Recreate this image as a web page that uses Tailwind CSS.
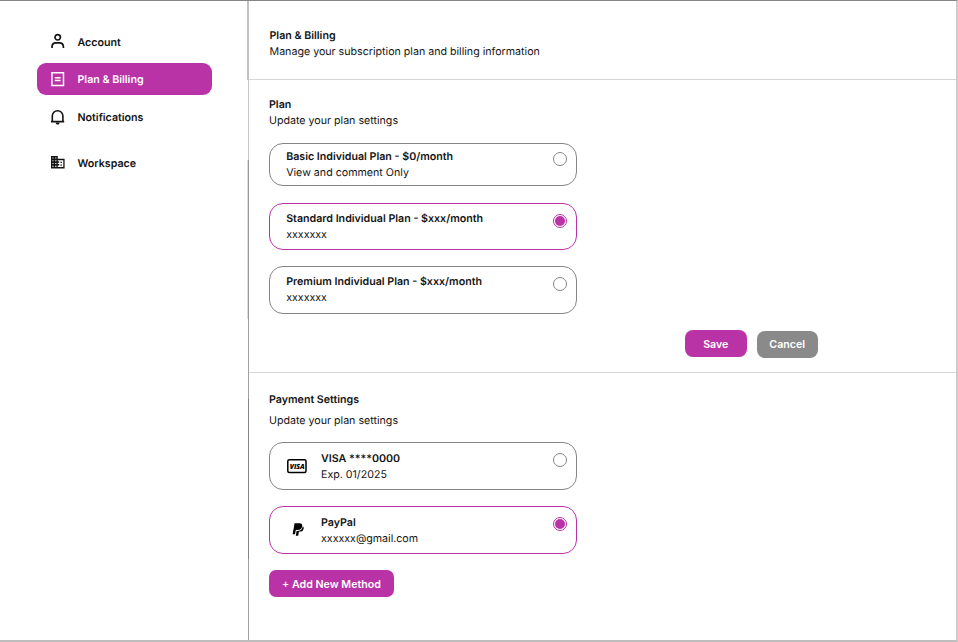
<!DOCTYPE html>
<html lang="en">
<head>
<meta charset="utf-8">
<title>Plan &amp; Billing</title>
<script src="https://cdn.jsdelivr.net/npm/@tailwindcss/browser@4"></script>
</head>
<body class="bg-white font-['Inter',sans-serif] text-[10.66px] leading-4 text-[#141414] [text-rendering:geometricPrecision]">
<div class="flex h-[642px] w-[958px] overflow-hidden border-t border-r-2 border-b-2 border-t-[#858585] border-r-[#cccccc] border-b-[#bdbdbd]">
  <aside class="flex w-[247px] shrink-0 flex-col pt-[25px] pl-[37px] font-semibold">
    <a class="flex h-8 w-[175px] items-center pl-[13px]">
      <svg class="mr-[11.5px] -mt-[3px] size-4" viewBox="0 0 16 16" fill="none" stroke="currentColor" stroke-width="1.7"><circle cx="7.7" cy="4.3" r="2.7"/><path d="M2 15v-1.5a4 4 0 0 1 4-3.7h3.4a4 4 0 0 1 4 3.7V15"/></svg><span class="pt-[2px]">Account</span></a>
    <a class="mt-[5.4px] flex h-8 w-[175px] items-center rounded-[9px] bg-[#ba33a6] pl-[13px] text-white">
      <svg class="mr-[11.5px] size-4" viewBox="0 0 16 16" fill="none" stroke="currentColor" stroke-width="1.5"><path d="M1.9 1.8h11.6v12.6H1.9zM4.8 6.7h5.8M4.8 9.5h5.8"/></svg><span class="pt-[1px]">Plan &amp; Billing</span></a>
    <a class="mt-[5.6px] flex h-8 w-[175px] items-center pl-[13px]">
      <svg class="mr-[11.5px] size-4" viewBox="0 0 16 16" fill="none" stroke="currentColor" stroke-width="1.6"><path d="M1 12.6h13.2M2.3 12.6V7a5.3 5.3 0 0 1 10.6 0v5.6"/><path d="M5.4 13.6h4.4L8.6 15.4H6.6z" fill="currentColor" stroke="none"/></svg><span class="pt-[2px]">Notifications</span></a>
    <a class="mt-[14px] flex h-8 w-[175px] items-center pl-[13px]">
      <svg class="mr-[11.5px] -mt-px size-4" viewBox="0 0 16 16" fill="currentColor"><path fill-rule="evenodd" d="M1 2h6.8v2.8h6.8v9.6H1zM2.4 3.4v1.1h1.1V3.4zm2.8 0v1.1h1.2V3.4zM2.4 6.2v1.1h1.1V6.2zm2.8 0v1.1h1.2V6.2zM2.4 9v1.1h1.1V9zm2.8 0v1.1h1.2V9zm-2.8 2.7v1.2h1.1v-1.2zm2.8 0v1.2h1.2v-1.2zM7.8 6.2v1.1h1.4v1.4H7.8V10h1.4v1.4H7.8V13h5.5V6.2z"/><path d="M10.5 7.7h1.4v1.4h-1.4zM10.5 10.4h1.4v1.4h-1.4z"/></svg><span class="pt-[2px]">Workspace</span></a>
  </aside>
  <div class="flex w-[2px] shrink-0 flex-col items-end">
    <div class="h-[79px] w-[2px] bg-[#c2c2c2]"></div>
    <div class="h-[80px] w-px bg-[#c9c9c9]"></div>
    <div class="h-[159px] w-[2px] border-l border-[#dedede] bg-[#999999]"></div>
    <div class="h-[80px] w-px bg-[#a0a0a0]"></div>
    <div class="h-[160px] w-px bg-[#858585]"></div>
    <div class="grow w-px bg-[#a0a0a0]"></div>
  </div>
  <main class="flex grow flex-col">
    <header class="h-[79px] border-b border-[#d6d6d6] pt-[27px] pl-[20.5px]">
      <h1 class="font-semibold">Plan &amp; Billing</h1>
      <p>Manage your subscription plan and billing information</p>
    </header>
    <section class="h-[293px] border-b border-[#d6d6d6] pt-[17px] pl-[20px]">
      <h2 class="font-semibold">Plan</h2>
      <p>Update your plan settings</p>
      <label class="mt-[14px] flex h-[43px] w-[308px] rounded-[14px] border border-[#858585] pt-[5px] pr-[9.5px] pl-[16.2px]">
        <span class="grow"><b class="block font-semibold">Basic Individual Plan - $0/month</b>View and comment Only</span>
        <span class="mt-[3px] size-[14px] rounded-full border border-[#858585]"></span>
      </label>
      <label class="mt-[17px] flex h-[47px] w-[308px] rounded-[14px] border border-[#ba33a6] pt-[7px] pr-[9.5px] pl-[16.2px]">
        <span class="grow"><b class="block font-semibold">Standard Individual Plan - $xxx/month</b>xxxxxxx</span>
        <span class="mt-[3px] flex size-[14px] items-center justify-center rounded-full border border-[#ba33a6]"><i class="size-[10px] rounded-full bg-[#ba33a6]"></i></span>
      </label>
      <label class="mt-[16px] flex h-[48px] w-[308px] rounded-[14px] border border-[#858585] pt-[7px] pr-[9.5px] pl-[16.2px]">
        <span class="grow"><b class="block font-semibold">Premium Individual Plan - $xxx/month</b>xxxxxxx</span>
        <span class="mt-[3px] size-[14px] rounded-full border border-[#858585]"></span>
      </label>
      <div class="mt-[16px] ml-[416px] flex gap-[10px] font-semibold text-white">
        <button class="h-[27px] w-[61.5px] rounded-[8px] bg-[#ba33a6] pt-[2px]">Save</button>
        <button class="mt-px h-[27px] w-[61.5px] rounded-[8px] bg-[#8a8a8a]">Cancel</button>
      </div>
    </section>
    <section class="pt-[19px] pl-[20px]">
      <h2 class="font-semibold">Payment Settings</h2>
      <p class="mt-[5px]">Update your plan settings</p>
      <label class="mt-[13px] flex h-[48px] w-[308px] rounded-[14px] border border-[#858585] pt-[8px] pr-[9.5px] pl-[17px]">
        <svg class="mt-[8px] mr-[14px] h-[15px] w-[20px]" viewBox="0 0 20 15" fill="none"><rect x=".8" y=".8" width="18.2" height="12.6" rx="1.5" stroke="#000" stroke-width="1.5"/><text x="2.7" y="9.9" font-family="Open Sans" font-weight="800" font-style="italic" font-size="7.2" textLength="15" lengthAdjust="spacingAndGlyphs" fill="#000">VISA</text></svg>
        <span class="grow"><b class="block font-semibold">VISA ****0000</b>Exp. 01/2025</span>
        <span class="mt-[2px] size-[14px] rounded-full border border-[#858585]"></span>
      </label>
      <label class="mt-[16px] flex h-[48px] w-[308px] rounded-[14px] border border-[#ba33a6] pt-[8px] pr-[9.5px] pl-[17px]">
        <svg class="mt-[7px] mr-[14px] h-[15px] w-[20px]" viewBox="0 0 20 15" fill="#000"><path d="M7.6 1.3h4.8c2.2 0 3.1 1.2 2.8 3-.4 2.5-2 3.7-4.3 3.7H9.4c-.5 0-.7.3-.8.7L8 12.3H5.6z"/><path d="M15.8 4.3c.9.6 1 1.5.8 2.5-.4 2-1.7 2.8-3.5 2.8h-.6c-.4 0-.6.2-.7.6l-.6 3.5H8.8l.8-4.8H11c2.7 0 4.3-1.4 4.8-4.6z"/></svg>
        <span class="grow"><b class="block font-semibold">PayPal</b>xxxxxx@gmail.com</span>
        <span class="mt-[2px] flex size-[14px] items-center justify-center rounded-full border border-[#ba33a6]"><i class="size-[10px] rounded-full bg-[#ba33a6]"></i></span>
      </label>
      <button class="mt-[16px] h-[27px] w-[125px] rounded-[7px] bg-[#ba33a6] pt-[2px] font-semibold text-white">+ Add New Method</button>
    </section>
  </main>
</div>
</body>
</html>
